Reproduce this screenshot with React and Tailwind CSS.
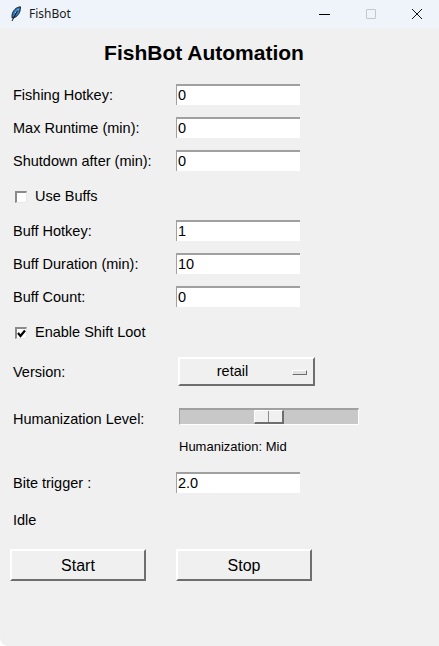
const font = "font-['Liberation_Sans',Arial,sans-serif]";

function Entry({ value }) {
  return (
    <div className="w-[124px] h-[21px] bg-white border-t-2 border-l border-[#a0a0a0] pl-px text-[14.5px] leading-[19px] text-black">
      {value}
    </div>
  );
}

function FieldRow({ label, value, className }) {
  return (
    <div className={`flex items-center h-[21px] ${className}`}>
      <div className="w-[176px] pl-[13px] pt-[2px] text-[14.5px] text-black">{label}</div>
      <Entry value={value} />
    </div>
  );
}

function Check({ label, checked, className }) {
  return (
    <div className={`flex items-center h-[20px] pl-[15px] ${className}`}>
      <div className="w-[12px] h-[12px] bg-white border-t-2 border-l-2 border-[#8a8a8a] border-r border-b border-r-[#e8e8e8] border-b-[#e8e8e8] flex items-center justify-center">
        {checked && (
          <svg width="9" height="9" viewBox="0 0 9 9">
            <path d="M1 4 L3.5 7 L8 1.5" fill="none" stroke="#000" strokeWidth="2.2" />
          </svg>
        )}
      </div>
      <span className="ml-[8px] text-[14.5px] text-black">{label}</span>
    </div>
  );
}

function RaisedButton({ children, className }) {
  return (
    <button className={`h-[32px] pt-[2px] bg-[#f0f0f0] border-t-2 border-l-2 border-b-2 border-r-2 border-t-white border-l-white border-b-[#6e6e6e] border-r-[#6e6e6e] text-[16px] text-black ${className}`}>
      {children}
    </button>
  );
}

export default function App() {
  return (
    <div className={`${font} w-[439px] h-[646px] bg-[#f0f0f0] overflow-hidden rounded-bl-lg`}>
      {/* Title bar */}
      <div className="h-[28px] bg-[#eff4fa] flex items-center">
        <svg className="ml-[10px]" width="12" height="16" viewBox="0 0 12 16">
          <path d="M10.5 0.8 C6 1.2 2.8 4.5 2 9 L2 12 C5.8 12 9 8.5 10 5 Z" fill="#2f7fc4" stroke="#111" strokeWidth="0.9" />
          <path d="M8.5 3 L5 7" stroke="#9fd0f2" strokeWidth="1" fill="none" />
          <path d="M7.5 4.5 L2 15" stroke="#111" strokeWidth="1" fill="none" />
        </svg>
        <span className="ml-[7px] text-[12px] text-[#1a1a1a] font-['Noto_Sans',sans-serif]">FishBot</span>
        <div className="ml-auto flex items-center">
          <div className="w-[11px] h-px bg-black mr-[36px]" />
          <div className="w-[10px] h-[10px] border border-[#c4c6ca] rounded-[1px] mr-[35px]" />
          <svg className="mr-[16px]" width="12" height="12" viewBox="0 0 12 12">
            <path d="M1 1 L11 11 M11 1 L1 11" stroke="#111" strokeWidth="1" />
          </svg>
        </div>
      </div>

      <h1 className="mt-[12px] h-[26px] pr-[31px] text-center text-[21px] leading-[26px] font-bold text-black">FishBot Automation</h1>

      <FieldRow className="mt-[18px]" label="Fishing Hotkey:" value="0" />
      <FieldRow className="mt-[12px]" label="Max Runtime (min):" value="0" />
      <FieldRow className="mt-[12px]" label="Shutdown after (min):" value="0" />
      <Check className="mt-[16px]" label="Use Buffs" />
      <FieldRow className="mt-[13px]" label="Buff Hotkey:" value="1" />
      <FieldRow className="mt-[12px]" label="Buff Duration (min):" value="10" />
      <FieldRow className="mt-[12px]" label="Buff Count:" value="0" />
      <Check className="mt-[16px]" label="Enable Shift Loot" checked />

      {/* Version */}
      <div className="mt-[14px] flex items-center h-[29px]">
        <div className="w-[178px] pl-[13px] pt-[2px] text-[14.5px] text-black">Version:</div>
        <div className="relative w-[137px] h-[29px] bg-[#f0f0f0] border-t-2 border-l-2 border-b-2 border-r-2 border-t-white border-l-white border-b-[#6e6e6e] border-r-[#6e6e6e] flex items-center justify-center pr-[28px] text-[14.5px] text-black">
          retail
          <div className="absolute right-[6px] top-[11px] w-[15px] h-[5px] bg-[#e0e0e0] border border-t-white border-l-white border-b-[#6e6e6e] border-r-[#6e6e6e]" />
        </div>
      </div>

      {/* Humanization slider */}
      <div className="mt-[22px] flex items-start h-[17px]">
        <div className="w-[179px] pl-[13px] text-[14.5px] leading-[22px] text-black">Humanization Level:</div>
        <div className="relative w-[180px] h-[17px] bg-[#c8c8c8] border-t-2 border-l border-t-[#a0a0a0] border-l-[#a0a0a0] border-b border-r border-b-white border-r-white">
          <div className="absolute left-[74px] top-0 w-[30px] h-[14px] flex border-t border-l border-white border-b-2 border-r-2 border-b-[#6e6e6e] border-r-[#6e6e6e] bg-[#f0f0f0]">
            <div className="w-[14px] border-r border-[#8a8a8a]" />
          </div>
        </div>
      </div>
      <div className="mt-[13px] pl-[179px] h-[17px] text-[13px] leading-[17px] text-black">Humanization: Mid</div>

      <FieldRow className="mt-[17px]" label="Bite trigger :" value="2.0" />
      <div className="mt-[17px] pl-[13px] h-[20px] text-[14.5px] leading-[20px] text-black">Idle</div>

      <div className="mt-[19px] flex">
        <RaisedButton className="ml-[10px] w-[136px]">Start</RaisedButton>
        <RaisedButton className="ml-[30px] w-[136px]">Stop</RaisedButton>
      </div>
    </div>
  );
}
